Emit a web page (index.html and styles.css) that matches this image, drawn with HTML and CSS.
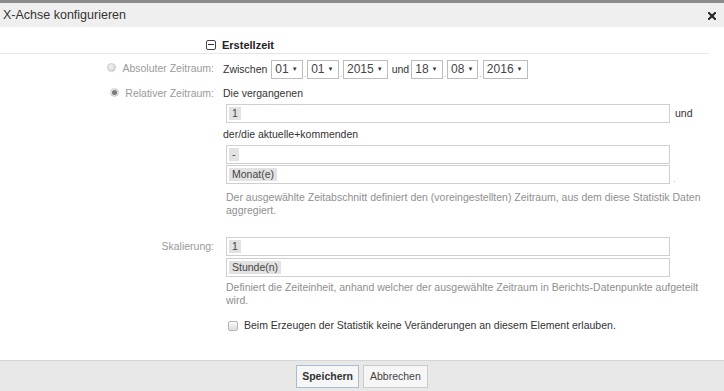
FILE: index.html
```html
<!DOCTYPE html>
<html lang="de">
<head>
<meta charset="utf-8">
<title>X-Achse konfigurieren</title>
<link rel="stylesheet" href="styles.css">
</head>
<body>
<div class="dialog">
  <div class="titlebar">
    <span class="title">X-Achse konfigurieren</span>
    <svg class="close" width="8" height="8" viewBox="0 0 8 8"><path d="M1 1 L7 7 M7 1 L1 7" stroke="#222" stroke-width="2" stroke-linecap="square"/></svg>
  </div>
  <div class="content">
    <div class="section-head">
      <span class="collapse"><span class="minus"></span></span>
      <span class="section-title">Erstellzeit</span>
    </div>

    <div class="form">
      <div class="label"><span class="radio"></span>Absoluter Zeitraum:</div>
      <div class="field row-abs">
        <span class="txt">Zwischen</span>
        <span class="sel">01<i>▼</i></span><span class="dot">.</span>
        <span class="sel">01<i>▼</i></span><span class="dot">.</span>
        <span class="sel">2015<i>▼</i></span>
        <span class="txt und">und</span>
        <span class="sel">18<i>▼</i></span><span class="dot">.</span>
        <span class="sel">08<i>▼</i></span><span class="dot">.</span>
        <span class="sel">2016<i>▼</i></span>
      </div>

      <div class="label rel"><span class="radio checked"></span>Relativer Zeitraum:</div>
      <div class="field rel-field">
        <div class="txt line">Die vergangenen</div>
        <div class="inline">
          <div class="box"><span class="chip">1</span></div>
          <span class="txt after">und</span>
        </div>
        <div class="txt line second">der/die aktuelle+kommenden</div>
        <div class="inline">
          <div class="box"><span class="chip">-</span></div>
        </div>
        <div class="inline gap1">
          <div class="box"><span class="chip">Monat(e)</span></div>
          <span class="txt after small">.</span>
        </div>
        <p class="help">Der ausgewählte Zeitabschnitt definiert den (voreingestellten) Zeitraum, aus dem diese Statistik Daten aggregiert.</p>
      </div>

      <div class="label skal">Skalierung:</div>
      <div class="field skal-field">
        <div class="box"><span class="chip">1</span></div>
        <div class="box gap1"><span class="chip">Stunde(n)</span></div>
        <p class="help">Definiert die Zeiteinheit, anhand welcher der ausgewählte Zeitraum in Berichts-Datenpunkte aufgeteilt wird.</p>
        <label class="check-row"><span class="checkbox"></span>Beim Erzeugen der Statistik keine Veränderungen an diesem Element erlauben.</label>
      </div>
    </div>
  </div>
  <div class="footer">
    <button class="btn primary">Speichern</button>
    <button class="btn">Abbrechen</button>
  </div>
</div>
</body>
</html>
```

FILE: styles.css
```css
html, body {
  margin: 0;
  padding: 0;
  background: #ffffff;
}
body {
  font-family: "Liberation Sans", Arial, sans-serif;
  font-size: 10.5px;
  color: #333;
}
.dialog {
  width: 724px;
  height: 391px;
  display: flex;
  flex-direction: column;
  overflow: hidden;
}
.titlebar {
  border-top: 3px solid #8b8b8b;
  height: 24px;
  background: #efefef;
  display: flex;
  align-items: center;
  justify-content: space-between;
  padding: 0 8px 0 3px;
}
.title {
  font-size: 12.5px;
  color: #333;
}
.close { display: block; margin-top: 1px; }
.content {
  flex: 1;
  padding-top: 9px;
}
.section-head {
  width: 709px;
  height: 18px;
  border-bottom: 1px solid #e6e6e6;
  display: flex;
  align-items: center;
  padding-left: 206px;
  box-sizing: border-box;
  gap: 6px;
}
.collapse {
  width: 8px;
  height: 8px;
  border: 1px solid #444;
  border-radius: 2px;
  display: flex;
  align-items: center;
  justify-content: center;
}
.minus {
  width: 6px;
  height: 1px;
  background: #333;
}
.section-title {
  font-weight: bold;
  font-size: 11px;
  color: #222;
}
.form {
  display: grid;
  grid-template-columns: 214px 1fr;
  column-gap: 9px;
  margin-top: 4px;
}
.label {
  color: #9a9a9a;
  text-align: right;
  display: flex;
  justify-content: flex-end;
  align-items: flex-start;
  gap: 6px;
  line-height: 18px;
  padding-top: 1px;
}
.radio {
  width: 9px;
  height: 9px;
  border-radius: 50%;
  background: radial-gradient(circle at 40% 35%, #f4f4f4, #cfcfcf);
  border: 1px solid #cdcdcd;
  margin-top: 4px;
  box-sizing: border-box;
  display: flex;
  align-items: center;
  justify-content: center;
}
.radio.checked::after {
  content: "";
  width: 5px;
  height: 5px;
  border-radius: 50%;
  background: #7a7a7a;
}
.label.rel { padding-top: 6px; line-height: 16px; }
.label.rel .radio { margin-top: 3px; }
.field { color: #333; }
.row-abs {
  display: flex;
  align-items: center;
  height: 20px;
  padding-top: 1px;
}
.txt { color: #333; }
.row-abs .txt { margin-right: 4px; }
.row-abs .und { margin-left: 4px; margin-right: 2px; }
.sel {
  display: inline-flex;
  align-items: center;
  height: 17px;
  border: 1px solid #bdbdbd;
  padding: 0 4px 0 3px;
  font-size: 12px;
  color: #444;
  background: #fff;
  gap: 3px;
}
.sel i {
  font-style: normal;
  font-size: 6px;
  color: #333;
}
.dot {
  color: #aaa;
  font-size: 9px;
  align-self: flex-end;
  margin: 0 1px;
  line-height: 10px;
}
.rel-field { padding-top: 6px; }
.line { line-height: 16px; }
.line.second { margin-top: 3px; }
.inline {
  display: flex;
  align-items: center;
  gap: 5px;
  margin-top: 3px;
}
.inline.gap1, .box.gap1 { margin-top: 1px; }
.box {
  width: 444px;
  height: 19px;
  border: 1px solid #cfcfcf;
  box-sizing: border-box;
  margin-left: 3px;
  display: flex;
  align-items: center;
  padding-left: 2px;
  background: #fff;
}
.chip {
  background: #e2e2e2;
  color: #444;
  padding: 0 3px;
  line-height: 13px;
  font-size: 10.5px;
}
.after { line-height: 19px; }
.after.small { color: #bbb; font-size: 9px; align-self: flex-end; line-height: 10px; margin-left: -2px; }
.help {
  margin: 7px 0 0 3px;
  color: #8f8f8f;
  line-height: 13px;
  width: 480px;
}
.label.skal { padding-top: 20px; line-height: 19px; }
.skal-field { padding-top: 20px; }
.skal-field .box.gap1 { margin-top: 2px; }
.skal-field .help { margin-top: 4px; }
.check-row {
  display: flex;
  align-items: center;
  gap: 6px;
  margin-top: 12px;
  margin-left: 5px;
  line-height: 13px;
  color: #333;
}
.checkbox {
  width: 10px;
  height: 10px;
  border: 1px solid #b5b5b5;
  border-radius: 2px;
  background: linear-gradient(#fafafa, #dcdcdc);
  box-sizing: border-box;
}
.footer {
  height: 30px;
  flex: none;
  background: #e8e8e8;
  border-top: 1px solid #d6d6d6;
  display: flex;
  align-items: center;
  justify-content: center;
  gap: 4px;
}
.btn {
  font-family: "Liberation Sans", Arial, sans-serif;
  font-size: 10.5px;
  height: 23px;
  padding: 0 6px;
  border: 1px solid #cbcbcb;
  background: #f6f6f6;
  color: #444;
  border-radius: 0;
}
.btn.primary {
  font-weight: bold;
  border-color: #a9bcd6;
  color: #333;
  padding: 0 5px;
}
```
